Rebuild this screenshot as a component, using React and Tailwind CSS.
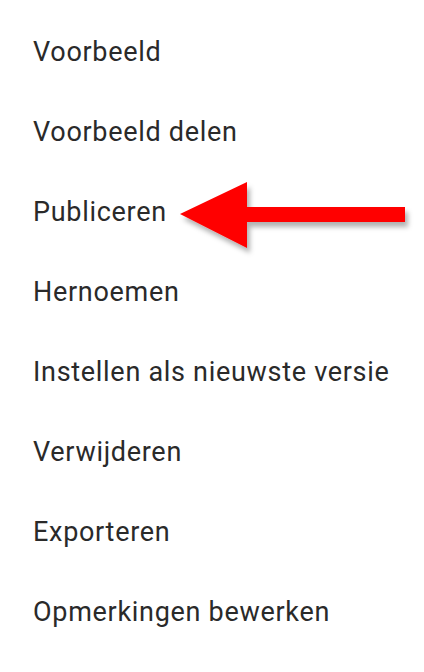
const items = [
  "Voorbeeld",
  "Voorbeeld delen",
  "Publiceren",
  "Hernoemen",
  "Instellen als nieuwste versie",
  "Verwijderen",
  "Exporteren",
  "Opmerkingen bewerken",
];

const Arrow = () => (
  <svg
    className="absolute left-0 top-0 pointer-events-none"
    width="424"
    height="672"
    viewBox="0 0 424 672"
  >
    <defs>
      <filter id="arrowShadow" x="-20%" y="-40%" width="140%" height="180%">
        <feDropShadow dx="3" dy="5" stdDeviation="2.5" floodColor="#000" floodOpacity="0.3" />
      </filter>
    </defs>
    <polygon
      points="180,214 247,182 247,207 405,207 405,222 247,222 247,248"
      fill="#ff0000"
      filter="url(#arrowShadow)"
    />
  </svg>
);

export default function App() {
  return (
    <div className="relative w-[424px] h-[672px] bg-white overflow-hidden">
      <ul className="flex flex-col pt-[12px]">
        {items.map((label) => (
          <li
            key={label}
            className="h-[80px] flex items-center pl-[33px] text-[27px] leading-[80px] tracking-[0.7px] text-[#2a2a2a] whitespace-nowrap"
            style={{ fontFamily: "Roboto, 'Liberation Sans', sans-serif" }}
          >
            {label}
          </li>
        ))}
      </ul>
      <Arrow />
    </div>
  );
}
